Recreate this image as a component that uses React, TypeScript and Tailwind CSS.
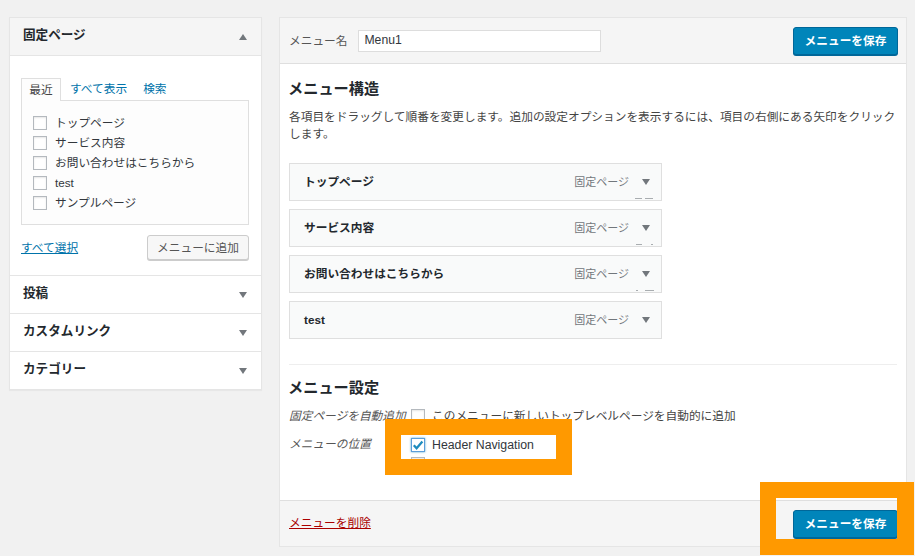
const font = '[font-family:"Liberation_Sans","Noto_Sans_CJK_JP",sans-serif]';

function Tri({ up = false }: { up?: boolean }) {
  return (
    <svg width="8" height="6" viewBox="0 0 8 6" className="shrink-0">
      <path d={up ? "M4 0L8 6H0Z" : "M0 0H8L4 6Z"} fill="#72777c" />
    </svg>
  );
}

function Box({ checked = false, focus = false }: { checked?: boolean; focus?: boolean }) {
  return (
    <span className={`flex h-[14px] w-[14px] shrink-0 items-center justify-center border bg-white ${focus ? "border-[#5b9dd9] shadow-[0_0_2px_rgba(30,140,190,0.8)]" : "border-[#b4b9be] shadow-[inset_0_1px_2px_rgba(0,0,0,0.1)]"}`}>
      {checked && (
        <svg width="12" height="12" viewBox="0 0 12 12">
          <path d="M1.8 6.2L4.6 9.2L10.4 2.6" fill="none" stroke="#1e8cbe" strokeWidth="2.3" />
        </svg>
      )}
    </span>
  );
}

function SaveButton() {
  return (
    <button className="h-[28px] w-[105px] rounded-[3px] border border-[#006799] bg-[#0085ba] text-[11.7px] font-bold text-white shadow-[0_1px_0_#006799]">
      メニューを保存
    </button>
  );
}

function Section({ title }: { title: string }) {
  return (
    <div className="flex h-[38px] items-center justify-between border-t border-[#e5e5e5] pl-[13px] pr-[14px]">
      <h3 className="-mt-[2px] text-[12.6px] font-bold text-[#23282d]">{title}</h3>
      <Tri />
    </div>
  );
}

function MenuItem({ title, marks = [] }: { title: string; marks?: [number, number][] }) {
  return (
    <div className="relative flex h-[38px] items-center overflow-hidden border border-[#dfdfdf] bg-[#f9fafa] pl-[14px] pr-[11px]">
      <span className="-mt-[1px] flex-1 text-[11.7px] font-bold text-[#23282d]">{title}</span>
      <span className="mr-[13px] text-[11px] text-[#72777c]">固定ページ</span>
      <Tri />
      {marks.map(([right, width]) => (
        <span
          key={right}
          className="absolute bottom-[1px] h-[1px] bg-[#a9adb0]"
          style={{ right, width }}
        />
      ))}
    </div>
  );
}

export default function App() {
  const pages = ["トップページ", "サービス内容", "お問い合わせはこちらから", "test", "サンプルページ"];
  return (
    <div className={`relative h-[556px] w-[915px] overflow-hidden bg-[#f1f1f1] pl-[9px] pt-[17px] ${font} text-[11.7px] text-[#444]`}>
      <div className="flex items-start gap-[17px]">
        <aside className="w-[253px] border border-[#e5e5e5] bg-white shadow-[0_1px_1px_rgba(0,0,0,0.04)]">
          <div className="flex h-[38px] items-center justify-between border-b border-[#e5e5e5] bg-[#f5f5f5] pl-[13px] pr-[14px]">
            <h3 className="-mt-[3px] text-[12.6px] font-bold text-[#23282d]">固定ページ</h3>
            <Tri up />
          </div>
          <div className="pb-[15px] pl-[11px] pr-[12px] pt-[21px]">
            <div className="flex h-[23px] items-end">
              <span className="relative -mb-px flex h-[23px] w-[40px] items-center justify-center border border-b-0 border-[#dfdfdf] bg-[#fdfdfd] text-[#444]">最近</span>
              <span className="flex h-[22px] items-center pl-[9px] text-[#0073aa]">すべて表示</span>
              <span className="flex h-[22px] items-center pl-[16px] text-[#0073aa]">検索</span>
            </div>
            <div className="flex h-[125px] flex-col border border-[#dfdfdf] bg-[#fdfdfd] pl-[11px] pt-[12px]">
              {pages.map((p) => (
                <label key={p} className="flex h-[20px] items-center gap-[8px] text-[#32373c]">
                  <Box />
                  <span>{p}</span>
                </label>
              ))}
            </div>
            <div className="mt-[10px] flex items-center justify-between">
              <a className="text-[#0073aa] underline">すべて選択</a>
              <button className="h-[25px] w-[102px] rounded-[3px] border border-[#cccccc] bg-[#f7f7f7] text-[11.7px] text-[#555] shadow-[0_1px_0_#ccc]">メニューに追加</button>
            </div>
          </div>
          <Section title="投稿" />
          <Section title="カスタムリンク" />
          <Section title="カテゴリー" />
        </aside>

        <main className="flex h-[530px] w-[628px] flex-col border border-[#e5e5e5] bg-white">
          <header className="flex h-[46px] shrink-0 items-center border-b border-[#dfdfdf] bg-[#f5f5f5] pl-[9px] pr-[8px]">
            <span className="mr-[11px] text-[#555]">メニュー名</span>
            <span className="flex h-[22px] w-[243px] items-center border border-[#dddddd] bg-white pl-[5px] text-[12.2px] text-[#32373c]">Menu1</span>
            <span className="flex-1" />
            <SaveButton />
          </header>
          <section className="flex-1 px-[9px]">
            <h3 className="-ml-px mt-[15px] text-[15.2px] font-bold leading-[20px] text-[#23282d]">メニュー構造</h3>
            <p className="mt-[9px] text-[11.7px] leading-[17px] text-[#444]">
              各項目をドラッグして順番を変更します。追加の設定オプションを表示するには、項目の右側にある矢印をクリックします。
            </p>
            <div className="mt-[21px] flex w-[373px] flex-col gap-[8px]">
              <MenuItem title="トップページ" marks={[[8, 8], [19, 7]]} />
              <MenuItem title="サービス内容" marks={[[8, 2], [19, 6]]} />
              <MenuItem title="お問い合わせはこちらから" marks={[[7, 9], [23, 2]]} />
              <MenuItem title="test" />
            </div>
            <div className="mt-[25px] border-t border-[#eeeeee]" />
            <h3 className="-ml-px mt-[13px] text-[15.2px] font-bold leading-[20px] text-[#23282d]">メニュー設定</h3>
            <div className="mt-[10px] flex h-[16px] items-center">
              <i className="w-[122px] text-[#555]">固定ページを自動追加</i>
              <Box />
              <span className="ml-[7px]">このメニューに新しいトップレベルページを自動的に追加</span>
            </div>
            <div className="mt-[13px] flex items-start">
              <i className="-mt-px w-[122px] leading-[16px] text-[#555]">メニューの位置</i>
              <div className="flex flex-col gap-[4px]">
                <div className="flex h-[15px] items-center gap-[7px]">
                  <Box checked focus />
                  <span className="pt-[2px] text-[12.3px] text-[#32373c]">Header Navigation</span>
                </div>
                <div className="flex h-[15px] items-center gap-[7px]">
                  <Box />
                </div>
              </div>
            </div>
          </section>
          <footer className="flex h-[46px] shrink-0 items-center justify-between border-t border-[#dfdfdf] bg-[#f5f5f5] pl-[9px] pr-[8px]">
            <a className="-mt-[2px] text-[#a00] underline">メニューを削除</a>
            <span className="pt-[1px]"><SaveButton /></span>
          </footer>
        </main>
      </div>
      <div className="absolute left-[385px] top-[419px] h-[56px] w-[187px] border-[16px] border-[#ff9900]" />
      <div className="absolute left-[760px] top-[482px] h-[73px] w-[154px] border-[16px] border-r-[17px] border-[#ff9900]" />
    </div>
  );
}
